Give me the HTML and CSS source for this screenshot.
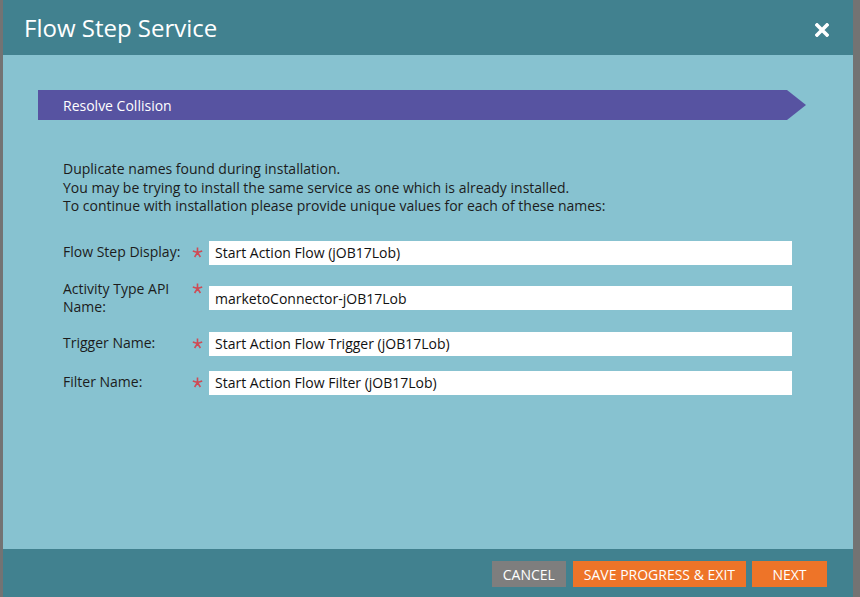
FILE: index.html
```html
<!DOCTYPE html>
<html lang="en">
<head>
<meta charset="utf-8">
<title>Flow Step Service</title>
<link rel="stylesheet" href="styles.css">
</head>
<body>
<div class="dialog">
  <header class="dlg-header">
    <h1 class="dlg-title">Flow Step Service</h1>
    <button class="dlg-close" aria-label="Close">
      <svg width="14" height="14" viewBox="0 0 14 14"><path d="M2 2 L12 12 M12 2 L2 12" stroke="#fff" stroke-width="3.6" stroke-linecap="square"/></svg>
    </button>
  </header>
  <main class="dlg-body">
    <div class="step-bar">Resolve Collision</div>
    <p class="intro">Duplicate names found during installation.<br>You may be trying to install the same service as one which is already installed.<br>To continue with installation please provide unique values for each of these names:</p>
    <div class="form">
      <div class="row">
        <div class="lbl-wrap"><span class="lbl">Flow Step Display:</span><span class="req"><svg width="11" height="11" viewBox="0 0 11 11"><path d="M5.5 0.5 V5.5 M5.5 5.5 L0.8 4 M5.5 5.5 L10.2 4 M5.5 5.5 L2.6 10 M5.5 5.5 L8.4 10" stroke="#cf4b55" stroke-width="1.6"/></svg></span></div>
        <input class="field" type="text" value="Start Action Flow (jOB17Lob)">
      </div>
      <div class="row">
        <div class="lbl-wrap"><span class="lbl">Activity Type API Name:</span><span class="req"><svg width="11" height="11" viewBox="0 0 11 11"><path d="M5.5 0.5 V5.5 M5.5 5.5 L0.8 4 M5.5 5.5 L10.2 4 M5.5 5.5 L2.6 10 M5.5 5.5 L8.4 10" stroke="#cf4b55" stroke-width="1.6"/></svg></span></div>
        <input class="field" type="text" value="marketoConnector-jOB17Lob">
      </div>
      <div class="row">
        <div class="lbl-wrap"><span class="lbl">Trigger Name:</span><span class="req"><svg width="11" height="11" viewBox="0 0 11 11"><path d="M5.5 0.5 V5.5 M5.5 5.5 L0.8 4 M5.5 5.5 L10.2 4 M5.5 5.5 L2.6 10 M5.5 5.5 L8.4 10" stroke="#cf4b55" stroke-width="1.6"/></svg></span></div>
        <input class="field" type="text" value="Start Action Flow Trigger (jOB17Lob)">
      </div>
      <div class="row">
        <div class="lbl-wrap"><span class="lbl">Filter Name:</span><span class="req"><svg width="11" height="11" viewBox="0 0 11 11"><path d="M5.5 0.5 V5.5 M5.5 5.5 L0.8 4 M5.5 5.5 L10.2 4 M5.5 5.5 L2.6 10 M5.5 5.5 L8.4 10" stroke="#cf4b55" stroke-width="1.6"/></svg></span></div>
        <input class="field" type="text" value="Start Action Flow Filter (jOB17Lob)">
      </div>
    </div>
  </main>
  <footer class="dlg-footer">
    <button class="btn btn-cancel">CANCEL</button>
    <button class="btn btn-orange">SAVE PROGRESS &amp; EXIT</button>
    <button class="btn btn-orange btn-next">NEXT</button>
  </footer>
</div>
</body>
</html>
```
FILE: styles.css
```css
html, body {
  margin: 0;
  padding: 0;
  height: 100%;
  overflow: hidden;
}
body {
  background: #737373;
  font-family: "Open Sans", "Liberation Sans", sans-serif;
  font-size: 14px;
}
.dialog {
  margin-left: 3px;
  width: 850px;
  height: 597px;
  display: flex;
  flex-direction: column;
}
.dlg-header {
  height: 55px;
  flex: none;
  background: #41818f;
  display: flex;
  align-items: center;
  justify-content: space-between;
  padding: 0 24px 0 21px;
}
.dlg-title {
  margin: 0;
  font-size: 24px;
  font-weight: 400;
  color: #fff;
}
.dlg-close {
  border: 0;
  background: none;
  padding: 0;
  width: 14px;
  height: 14px;
  display: flex;
  margin-top: 5px;
}
.dlg-body {
  flex: 1;
  background: #87c2d0;
  padding: 35px 0 0 35px;
}
.step-bar {
  width: 743px;
  height: 30px;
  padding-left: 25px;
  background: #5753a1;
  color: #fff;
  display: flex;
  align-items: center;
  clip-path: polygon(0 0, 749px 0, 768px 15px, 749px 30px, 0 30px);
}
.intro {
  margin: 40px 0 0 25px;
  line-height: 18.5px;
  color: #1c1c1c;
}
.form {
  margin: 25px 0 0 25px;
  display: flex;
  flex-direction: column;
  gap: 15px;
}
.row {
  display: flex;
  align-items: center;
}
.lbl-wrap {
  width: 146px;
  display: flex;
  line-height: 18.5px;
  color: #1c1c1c;
}
.lbl {
  width: 126px;
}
.req {
  display: flex;
  height: 18.5px;
  align-items: center;
  margin-left: 3px;
}
.field {
  width: 583px;
  height: 24px;
  box-sizing: border-box;
  border: 0;
  padding: 0 6px;
  background: #fff;
  font-family: "Open Sans", "Liberation Sans", sans-serif;
  font-size: 14px;
  color: #111;
  outline: none;
}
.dlg-footer {
  height: 48px;
  flex: none;
  background: #41818f;
  display: flex;
  justify-content: flex-end;
  align-items: flex-start;
  padding: 12px 26px 0 0;
  box-sizing: border-box;
  gap: 6px;
}
.btn {
  border: 0;
  height: 26px;
  padding: 0 11px;
  font-family: "Open Sans", "Liberation Sans", sans-serif;
  font-size: 14px;
  color: #fff;
}
.btn-cancel {
  background: #7e7e7e;
  margin-right: 1px;
}
.btn-orange {
  background: #ee7428;
}
.btn-next {
  width: 75px;
}
```
